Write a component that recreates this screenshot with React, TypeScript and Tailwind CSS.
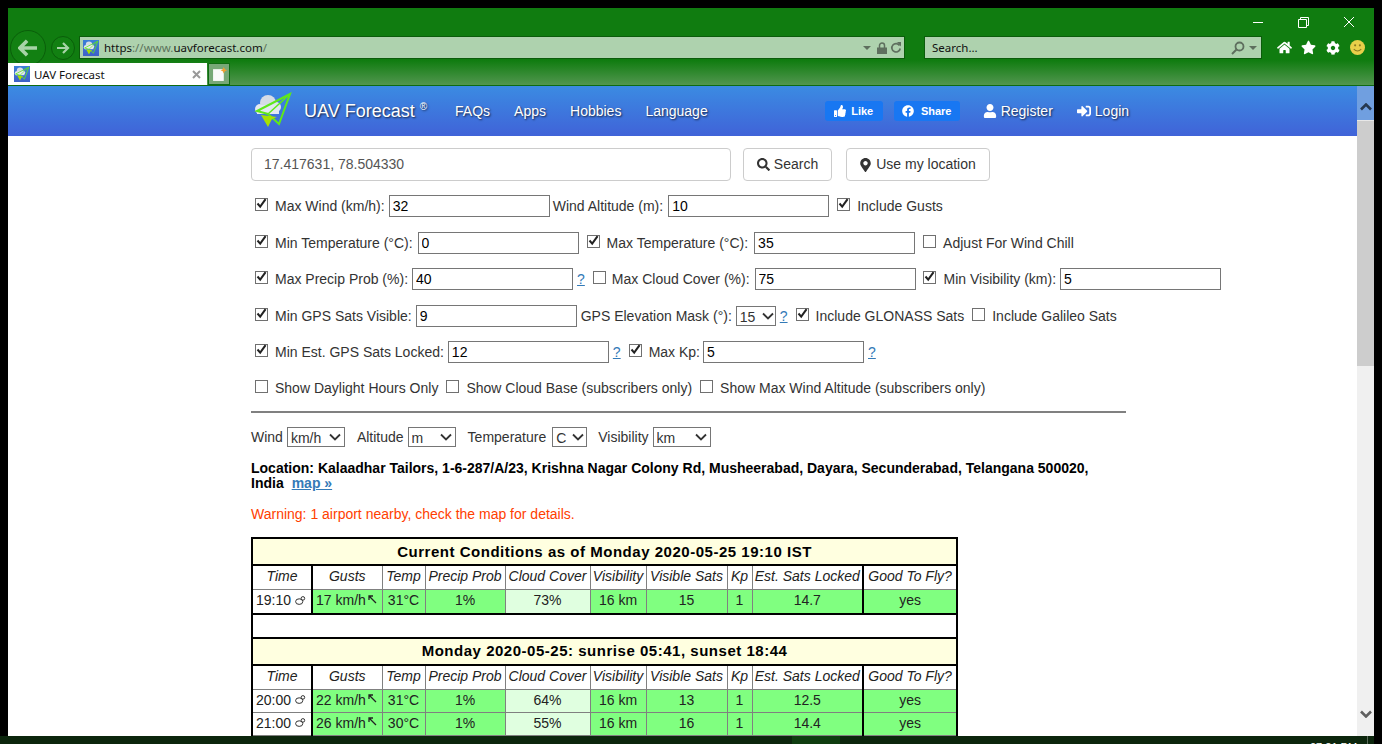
import React from 'react';
import { FaHome, FaStar, FaCog, FaSearch, FaMapMarkerAlt, FaThumbsUp, FaFacebook, FaUser, FaSignInAlt } from 'react-icons/fa';

const Logo = ({ className }: { className: string }) => (
  <svg viewBox="0 0 40 40" className={className}>
    <circle cx="7" cy="18" r="5" fill="#e3e8f0" />
    <circle cx="15" cy="12" r="8" fill="#d5dce6" />
    <circle cx="23" cy="16" r="5" fill="#dfe5ee" />
    <rect x="4" y="14" width="22" height="9" fill="#e3e8f0" />
    <path d="M37 3 L4 20 L15 23 L26 33 Z" fill="none" stroke="#5fe81a" strokeWidth="2" />
    <path d="M15 23 L37 3" fill="none" stroke="#5fe81a" strokeWidth="1.5" />
    <path d="M8 24 L24 26 L19 28 L15 36 Z" fill="#a8e000" />
  </svg>
);

const Favicon = () => (
  <span className="flex h-4 w-4 shrink-0 items-center justify-center bg-[linear-gradient(#3a7fd8,#3f60c8)]">
    <Logo className="h-4 w-4" />
  </span>
);

const Chevron = ({ className, weight = 1.8 }: { className: string; weight?: number }) => (
  <svg viewBox="0 0 12 8" className={className}>
    <path d="M1 1.5 L6 6.5 L11 1.5" fill="none" stroke="currentColor" strokeWidth={weight} />
  </svg>
);

const Check = ({ on, className = 'ml-2', gap = 'mr-[7px]' }: { on?: boolean; className?: string; gap?: string }) => (
  <span className={`relative -mt-[3px] h-[13px] w-[13px] shrink-0 border border-[#707070] bg-white ${gap} ${className}`}>
    {on && (
      <svg viewBox="0 0 13 13" className="absolute -left-px -top-[2px] h-[13px] w-[13px]">
        <path d="M2.5 6.5 L5.2 9.6 L10.6 2.2" fill="none" stroke="#222" strokeWidth="2" />
      </svg>
    )}
  </span>
);

const Field = ({ value, className = 'ml-1' }: { value: string; className?: string }) => (
  <input
    readOnly
    value={value}
    className={`h-[22px] w-[161px] shrink-0 border border-[#767676] bg-white px-[3px] text-[14px] text-black outline-none ${className}`}
  />
);

const Pick = ({ value, className, arrow = 'right-[4px]' }: { value: string; className: string; arrow?: string }) => (
  <span className={`relative h-5 shrink-0 ${className}`}>
    <select
      defaultValue={value}
      className="h-full w-full appearance-none border border-[#767676] bg-white pl-[3px] text-[14px] text-[#333] outline-none"
    >
      <option>{value}</option>
    </select>
    <Chevron className={`pointer-events-none absolute top-[6px] h-[8px] w-[12px] text-[#333] ${arrow}`} />
  </span>
);

const Help = () => <a className="ml-1 font-normal text-[#337ab7] underline">?</a>;

const NightIcon = () => (
  <svg viewBox="0 0 11 9" className="ml-[4px] -mt-[3px] inline-block h-[9px] w-[11px]">
    <ellipse cx="4.2" cy="5.6" rx="3.6" ry="2.8" fill="none" stroke="#333" strokeWidth="1" />
    <circle cx="7.9" cy="2.4" r="1.8" fill="none" stroke="#333" strokeWidth="1" />
  </svg>
);

const WindArrow = () => (
  <svg viewBox="0 0 9 9" className="ml-[2px] -mt-[5px] inline-block h-[9px] w-[9px]">
    <path d="M8 8 L1.5 1.5 M1 5 V1 H5" fill="none" stroke="#222" strokeWidth="1.3" />
  </svg>
);

const headers = ['Time', 'Gusts', 'Temp', 'Precip Prob', 'Cloud Cover', 'Visibility', 'Visible Sats', 'Kp', 'Est. Sats Locked', 'Good To Fly?'];

const gray = 'border-x border-b border-[#808080]';
const good = 'bg-[#80ff80]';
const fair = 'bg-[#e0ffe0]';

const Head = () => (
  <tr className="h-[24px]">
    {headers.map((h, i) => (
      <td
        key={h}
        className={`${gray} whitespace-nowrap p-0 pb-[2px] text-center italic ${i === 0 || i === 8 ? 'border-r-2 border-r-black' : ''} ${i === 0 ? 'border-l-2 border-l-black' : ''} ${i === 9 ? 'border-r-2 border-r-black' : ''}`}
      >
        {h}
      </td>
    ))}
  </tr>
);

const Title = ({ text }: { text: string }) => (
  <tr className="h-[27px]">
    <td colSpan={10} className="border-2 border-black bg-[#ffffe0] p-0 pt-px text-center text-[15px] font-bold tracking-[0.52px] text-black">
      {text}
    </td>
  </tr>
);

const Row = ({ time, gust, temp, cloud, sats, locked, last }: { time: string; gust: string; temp: string; cloud: string; sats: string; locked: string; last?: boolean }) => {
  const edge = last ? 'border-b-2 border-b-black' : '';
  const mid = 'p-0 pb-px text-center';
  return (
    <tr className={last ? 'h-[24px]' : 'h-[23px]'}>
      <td className={`${gray} ${edge} border-x-2 border-x-black bg-white p-0 pb-px pl-[3px] whitespace-nowrap`}>{time}<NightIcon /></td>
      <td className={`${gray} ${edge} ${good} p-0 pb-px pl-[3px] whitespace-nowrap`}>{gust} km/h<WindArrow /></td>
      <td className={`${gray} ${edge} ${good} ${mid}`}>{temp}</td>
      <td className={`${gray} ${edge} ${good} ${mid}`}>1%</td>
      <td className={`${gray} ${edge} ${fair} ${mid}`}>{cloud}</td>
      <td className={`${gray} ${edge} ${good} ${mid}`}>16 km</td>
      <td className={`${gray} ${edge} ${good} ${mid}`}>{sats}</td>
      <td className={`${gray} ${edge} ${good} ${mid}`}>1</td>
      <td className={`${gray} ${edge} ${good} border-r-2 border-r-black ${mid}`}>{locked}</td>
      <td className={`${gray} ${edge} ${good} border-r-2 border-r-black ${mid}`}>yes</td>
    </tr>
  );
};

const Forecast = () => (
  <table className="mt-[15px] w-[705px] table-fixed border-collapse text-[14px] text-[#222]">
    <colgroup>
      <col className="w-[60px]" />
      <col className="w-[70px]" />
      <col className="w-[43px]" />
      <col className="w-[80px]" />
      <col className="w-[85px]" />
      <col className="w-[56px]" />
      <col className="w-[81px]" />
      <col className="w-[25px]" />
      <col className="w-[111px]" />
      <col className="w-[94px]" />
    </colgroup>
    <tbody>
      <Title text="Current Conditions as of Monday 2020-05-25 19:10 IST" />
      <Head />
      <Row time="19:10" gust="17" temp="31°C" cloud="73%" sats="15" locked="14.7" last />
      <tr className="h-[24px]">
        <td colSpan={10} className="border-x-2 border-black bg-white p-0"></td>
      </tr>
      <Title text="Monday 2020-05-25: sunrise 05:41, sunset 18:44" />
      <Head />
      <Row time="20:00" gust="22" temp="31°C" cloud="64%" sats="13" locked="12.5" />
      <Row time="21:00" gust="26" temp="30°C" cloud="55%" sats="16" locked="14.4" />
    </tbody>
  </table>
);

const Browser = () => (
  <div className="relative h-[78px] shrink-0 bg-[linear-gradient(#107c10_0,#107c10_68%,#52964f_100%)] border-b border-[#0f6b12]">
    <div className="flex h-[28px] justify-end">
      <div className="flex h-[20px] items-center pr-[20px] pt-2 text-white">
        <span className="h-px w-[10px] bg-white" />
        <svg viewBox="0 0 11 11" className="ml-[35px] h-[11px] w-[11px]">
          <path d="M0.5 2.5 H8.5 V10.5 H0.5 Z M2.5 2.5 V0.5 H10.5 V8.5 H8.5" fill="none" stroke="#fff" strokeWidth="1" />
        </svg>
        <svg viewBox="0 0 10 10" className="ml-[35px] h-[10px] w-[10px]">
          <path d="M0 0 L10 10 M10 0 L0 10" stroke="#fff" strokeWidth="1" />
        </svg>
      </div>
    </div>
    <div className="flex h-[23px] items-center">
      <div className="ml-[2px] flex h-[36px] w-[36px] shrink-0 items-center justify-center rounded-full border border-[#0a5e0a] bg-[#128012]">
        <svg viewBox="0 0 22 20" className="h-[18px] w-[20px]">
          <path d="M10 2 L2 10 L10 18 M3 10 H21" fill="none" stroke="#a7d3a7" strokeWidth="4" />
        </svg>
      </div>
      <div className="ml-[5px] flex h-[24px] w-[24px] shrink-0 items-center justify-center rounded-full border border-[#0a5e0a] bg-[#128012]">
        <svg viewBox="0 0 14 12" className="h-[12px] w-[14px]">
          <path d="M7 1 L12 6 L7 11 M1 6 H12" fill="none" stroke="#a7d3a7" strokeWidth="2.2" />
        </svg>
      </div>
      <div className="ml-[4px] flex h-[23px] w-[826px] shrink-0 items-center border border-[#0b5c0b] bg-[#aed2ae] pl-[3px] pr-[2px] font-['Noto_Sans',sans-serif] text-[11.5px]">
        <Favicon />
        <span className="ml-[5px] text-[#111]">https</span>
        <span className="text-[#5c735c]">://www.</span>
        <span className="text-[#111]">uavforecast.com</span>
        <span className="text-[#5c735c]">/</span>
        <svg viewBox="0 0 8 4" className="ml-auto h-[4px] w-[8px]"><path d="M0 0 H8 L4 4 Z" fill="#5e6f5e" /></svg>
        <svg viewBox="0 0 10 12" className="ml-[6px] h-[12px] w-[10px]">
          <path d="M2.5 6 V3.5 A2.5 2.5 0 0 1 7.5 3.5 V6" fill="none" stroke="#5e6f5e" strokeWidth="1.5" />
          <rect y="5.5" width="10" height="6.5" fill="#5e6f5e" />
        </svg>
        <svg viewBox="0 0 12 12" className="ml-[3px] h-[12px] w-[12px]">
          <path d="M9.6 3.5 A4.2 4.2 0 1 0 10.2 6.5" fill="none" stroke="#5e6f5e" strokeWidth="1.7" />
          <path d="M7 0 H11 V4.5 Z" fill="#5e6f5e" />
        </svg>
      </div>
      <div className="ml-[19px] flex h-[23px] w-[338px] shrink-0 items-center border border-[#0b5c0b] bg-[#aed2ae] pl-[7px] pr-[4px] font-['Noto_Sans',sans-serif] text-[11.5px] text-[#111]">
        Search...
        <svg viewBox="0 0 14 14" className="ml-auto h-[14px] w-[14px]">
          <circle cx="8.5" cy="5.5" r="4" fill="none" stroke="#5e6f5e" strokeWidth="1.8" />
          <path d="M6 8 L1 13" stroke="#5e6f5e" strokeWidth="2" />
        </svg>
        <svg viewBox="0 0 8 4" className="ml-[4px] h-[4px] w-[8px]"><path d="M0 0 H8 L4 4 Z" fill="#5e6f5e" /></svg>
      </div>
      <div className="ml-[15px] flex items-center text-white">
        <FaHome className="h-[15px] w-[15px]" />
        <FaStar className="ml-[9px] h-[15px] w-[15px]" />
        <FaCog className="ml-[10px] h-[14px] w-[14px]" />
        <svg viewBox="0 0 14 14" className="ml-[10px] h-[15px] w-[15px]">
          <circle cx="7" cy="7" r="7" fill="#e8cf4a" />
          <circle cx="4.8" cy="5" r="1" fill="#8a7a20" />
          <circle cx="9.2" cy="5" r="1" fill="#8a7a20" />
          <path d="M3.5 8.5 Q7 12 10.5 8.5" fill="none" stroke="#8a7a20" strokeWidth="1" />
        </svg>
      </div>
    </div>
    <div className="mt-[4px] flex h-[22px]">
      <div className="flex w-[199px] items-center bg-white pl-[6px] pr-[6px] font-['Noto_Sans',sans-serif] text-[11.5px] text-[#111]">
        <Favicon />
        <span className="ml-1 pt-px">UAV Forecast</span>
        <svg viewBox="0 0 9 9" className="ml-auto h-[9px] w-[9px]">
          <path d="M1 1 L8 8 M8 1 L1 8" stroke="#999" strokeWidth="2" />
        </svg>
      </div>
      <div className="ml-px flex w-[22px] items-center justify-center border border-[#0f6b12] bg-[#77a877]">
        <svg viewBox="0 0 14 14" className="h-[15px] w-[15px]">
          <rect x="1" y="2" width="10" height="11" fill="#fafafa" />
          <path d="M11 0 L12 2 L14 3 L12 4 L11 6 L10 4 L8 3 L10 2 Z" fill="#f0a030" />
        </svg>
      </div>
    </div>
  </div>
);

const NavLink = ({ children, className = '' }: { children: React.ReactNode; className?: string }) => (
  <span className={`text-[14px] text-white [text-shadow:1px_1px_2px_rgba(0,0,0,0.7)] ${className}`}>{children}</span>
);

const Nav = () => (
  <nav className="flex h-[50px] shrink-0 items-center bg-[linear-gradient(#3b8be2,#4063d8)] font-['Liberation_Sans',sans-serif]">
    <Logo className="ml-[245px] h-10 w-10" />
    <span className="ml-[11px] text-[18px] text-white [text-shadow:1px_1px_2px_rgba(0,0,0,0.7)]">UAV Forecast</span>
    <span className="mb-[10px] ml-[5px] text-[10px] text-white [text-shadow:1px_1px_2px_rgba(0,0,0,0.7)]">®</span>
    <NavLink className="ml-[28px]">FAQs</NavLink>
    <NavLink className="ml-[24px]">Apps</NavLink>
    <NavLink className="ml-[24px]">Hobbies</NavLink>
    <NavLink className="ml-[24px]">Language</NavLink>
    <span className="ml-[117px] flex h-5 w-[58px] items-center justify-center gap-[5px] rounded-[3px] bg-[#1877f2] text-[11px] font-bold text-white">
      <FaThumbsUp className="h-3 w-3" />Like
    </span>
    <span className="ml-[11px] flex h-5 w-[66px] items-center justify-center gap-[7px] rounded-[3px] bg-[#1877f2] text-[11px] font-bold text-white">
      <FaFacebook className="h-3 w-3" />Share
    </span>
    <NavLink className="ml-[23px] flex items-center gap-1">
      <FaUser className="h-[14px] w-[14px]" />Register
    </NavLink>
    <NavLink className="ml-[24px] flex items-center gap-1">
      <FaSignInAlt className="h-[14px] w-[14px]" />Login
    </NavLink>
  </nav>
);

const Filters = () => (
  <div className="text-[14px] text-[#333]">
    <div className="flex h-[33px] items-stretch">
      <div className="flex w-[480px] items-center rounded border border-[#ccc] pl-[12px] text-[#555]">17.417631, 78.504330</div>
      <div className="ml-[12px] flex w-[89px] items-center justify-center gap-[4px] rounded border border-[#ccc]">
        <FaSearch className="h-[13px] w-[13px]" />Search
      </div>
      <div className="ml-[14px] flex w-[144px] items-center justify-center gap-[5px] rounded border border-[#ccc]">
        <FaMapMarkerAlt className="h-[14px] w-[11px]" />Use my location
      </div>
    </div>

    <div className="mt-[14px] flex h-[22px] items-center">
      <Check on className="ml-1" />Max Wind (km/h):<Field value="32" />
      <span className="ml-[3px]">Wind Altitude (m):</span><Field value="10" className="ml-[5px]" />
      <Check on />Include Gusts
    </div>
    <div className="mt-[15px] flex h-[22px] items-center">
      <Check on className="ml-1" />Min Temperature (°C):<Field value="0" className="ml-[5px]" />
      <Check on />Max Temperature (°C):<Field value="35" className="ml-[6px]" />
      <Check />Adjust For Wind Chill
    </div>
    <div className="mt-[14px] flex h-[22px] items-center">
      <Check on className="ml-1" />Max Precip Prob (%):<Field value="40" /><Help />
      <Check gap="mr-[6px]" />Max Cloud Cover (%):<Field value="75" className="ml-[5px]" />
      <Check on className="ml-[7px]" gap="mr-[8px]" />Min Visibility (km):<Field value="5" />
    </div>
    <div className="mt-[15px] flex h-[22px] items-center">
      <Check on className="ml-1" />Min GPS Sats Visible:<Field value="9" />
      <span className="ml-1">GPS Elevation Mask (°):</span>
      <Pick value="15" className="ml-1 w-[40px]" arrow="right-[2px]" /><Help />
      <Check on />Include GLONASS Sats
      <Check />Include Galileo Sats
    </div>
    <div className="mt-[14px] flex h-[22px] items-center">
      <Check on className="ml-1" />Min Est. GPS Sats Locked:<Field value="12" /><Help />
      <Check on />Max Kp:<Field value="5" className="ml-[3px]" /><Help />
    </div>
    <div className="mt-[14px] flex h-[22px] items-center">
      <Check className="ml-1" />Show Daylight Hours Only
      <Check />Show Cloud Base (subscribers only)
      <Check />Show Max Wind Altitude (subscribers only)
    </div>

    <hr className="mt-[12px] h-[2px] w-[875px] border-0 bg-[#808080]" />

    <div className="mt-[14px] flex h-5 items-center">
      Wind<Pick value="km/h" className="ml-1 w-[58px]" />
      <span className="ml-3">Altitude</span><Pick value="m" className="ml-1 w-[48px]" />
      <span className="ml-3">Temperature</span><Pick value="C" className="ml-[6px] w-[35px]" arrow="right-[3px]" />
      <span className="ml-[11px]">Visibility</span><Pick value="km" className="ml-1 w-[58px]" />
    </div>

    <p className="mt-[14px] w-[875px] text-[14px] leading-[15px] font-bold text-black">
      Location: Kalaadhar Tailors, 1-6-287/A/23, Krishna Nagar Colony Rd, Musheerabad, Dayara, Secunderabad, Telangana 500020, India
      <a className="ml-[8px] text-[#337ab7] underline">map »</a>
    </p>
    <p className="mt-[15px] leading-[16px] text-[#ff4000]">Warning: 1 airport nearby, check the map for details.</p>
    <Forecast />
  </div>
);

export default function App() {
  return (
    <div className="flex h-[744px] w-[1382px] flex-col overflow-hidden bg-black pt-2 font-['Liberation_Sans',sans-serif]">
      <div className="mx-2 flex h-[728px] flex-col">
        <Browser />
        <div className="flex min-h-0 flex-1">
          <div className="min-w-0 flex-1 overflow-hidden bg-white">
            <Nav />
            <div className="pl-[243px] pt-[12px]">
              <Filters />
            </div>
          </div>
          <div className="flex w-[17px] shrink-0 flex-col bg-[#f0f0f0]">
            <div className="flex h-[34px] items-center justify-center bg-[#709fe0] pt-2 text-[#26384f]">
              <Chevron className="h-[8px] w-[12px] rotate-180" weight={2.6} />
            </div>
            <div className="h-[246px] border-t border-[#e8e8e8] bg-[#cdcdcd]" />
            <div className="flex-1" />
            <div className="flex h-[44px] items-center justify-center text-[#606060]">
              <Chevron className="h-[8px] w-[12px]" weight={2.6} />
            </div>
          </div>
        </div>
      </div>
      <div className="relative mr-2 flex h-2 shrink-0 overflow-hidden bg-[#0c260d] pl-2">
        <span className="ml-[784px] h-2 w-[48px] bg-[#0f3d10]" />
        <span className="ml-[470px] pt-[5px] text-[11px] leading-[12px] text-white">07:21 PM</span>
        <span className="ml-[10px] h-2 w-px bg-[#5a6a5a]" />
      </div>
    </div>
  );
}
